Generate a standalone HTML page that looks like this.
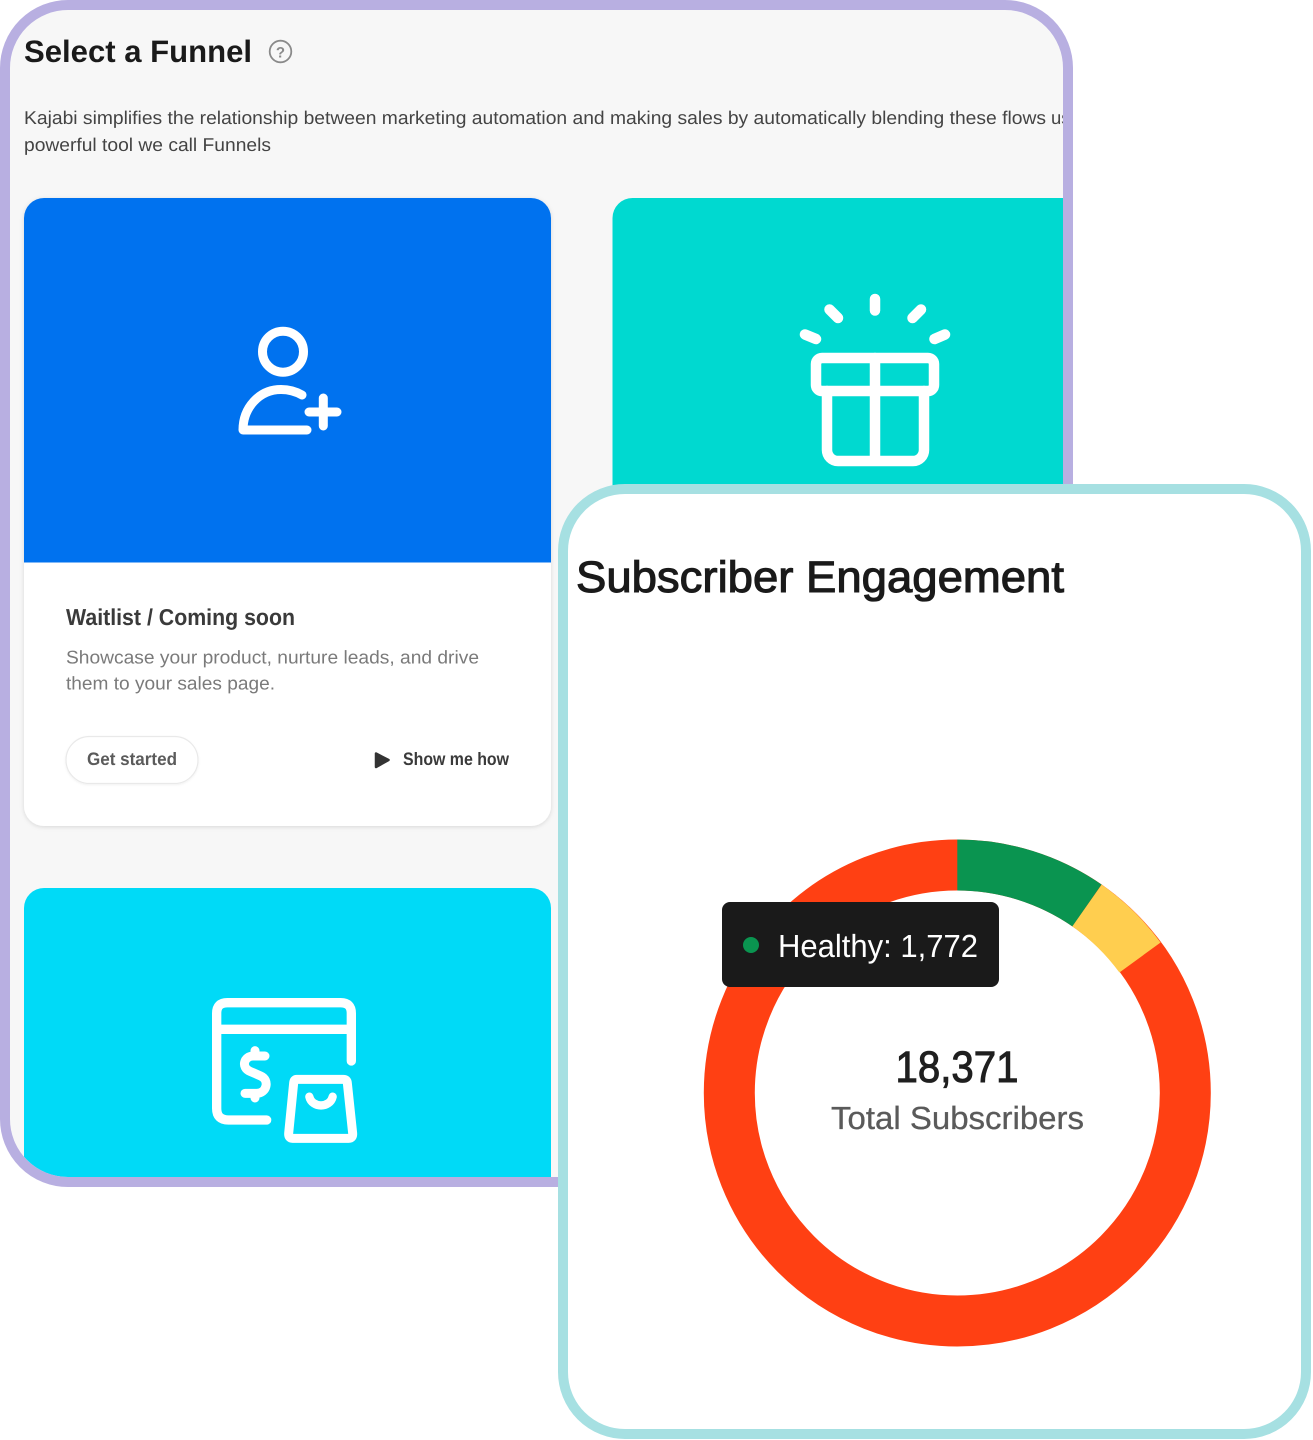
<!DOCTYPE html>
<html lang="en">
<head>
<meta charset="utf-8">
<title>Select a Funnel</title>
<style>
html,body{margin:0;padding:0;background:#fff;width:1313px;height:1440px;overflow:hidden}
svg{display:block;font-family:"Liberation Sans",sans-serif}
text{text-rendering:geometricPrecision}
</style>
</head>
<body>
<svg xmlns="http://www.w3.org/2000/svg" width="1313" height="1440" viewBox="0 0 1313 1440">
<defs>
<clipPath id="inner"><rect x="10" y="10" width="1053" height="1167" rx="58"/></clipPath>
<filter id="sh" x="-10%" y="-10%" width="120%" height="120%"><feDropShadow dx="0" dy="1" stdDeviation="2.2" flood-color="#000" flood-opacity=".13"/></filter>
<filter id="bs" x="-10%" y="-10%" width="120%" height="130%"><feDropShadow dx="0" dy="1" stdDeviation="1" flood-color="#000" flood-opacity=".06"/></filter>
</defs>

<g clip-path="url(#inner)">
<rect x="0" y="0" width="1073" height="1187" fill="#f7f7f7"/>
<text x="24" y="62" font-size="31" font-weight="700" fill="#1a1a1a" textLength="228" lengthAdjust="spacingAndGlyphs">Select a Funnel</text>
<circle cx="280.5" cy="51.5" r="10.8" fill="none" stroke="#8a8a8a" stroke-width="1.8"/>
<text x="280.5" y="57.5" font-size="15" font-weight="700" fill="#8a8a8a" text-anchor="middle">?</text>
<text x="24" y="124" font-size="18.5" fill="#444" textLength="1022" lengthAdjust="spacingAndGlyphs">Kajabi simplifies the relationship between marketing automation and making sales by automatically blending these flows</text>
<text x="1051" y="124" font-size="18.5" fill="#444">us</text>
<text x="24" y="151" font-size="18.5" fill="#444" textLength="247" lengthAdjust="spacingAndGlyphs">powerful tool we call Funnels</text>

<!-- card 1 -->
<rect x="24" y="198" width="527" height="628" rx="20" fill="#fff" filter="url(#sh)"/>
<path d="M24 562.5V218a20 20 0 0 1 20-20H531a20 20 0 0 1 20 20V562.5Z" fill="#0072ef"/>
<g fill="none" stroke="#fff" stroke-linecap="round" stroke-linejoin="round">
<circle cx="283" cy="351.7" r="20.5" stroke-width="9"/>
<path d="M302 395C295 391 288 389.5 281 389.5C259 389.5 243 408 243 430H307" stroke-width="9"/>
<path d="M309 412H337M323.3 398V426" stroke-width="9"/>
</g>
<text x="66" y="625" font-size="23" font-weight="700" fill="#3a3a3a" textLength="229" lengthAdjust="spacingAndGlyphs">Waitlist / Coming soon</text>
<text x="66" y="663.5" font-size="18.5" fill="#7a7a7a" textLength="413" lengthAdjust="spacingAndGlyphs">Showcase your product, nurture leads, and drive</text>
<text x="66" y="689.5" font-size="18.5" fill="#7a7a7a" textLength="209" lengthAdjust="spacingAndGlyphs">them to your sales page.</text>
<rect x="66" y="736.5" width="132" height="47" rx="23.5" fill="#fff" stroke="#e9e9e9" stroke-width="1.2" filter="url(#bs)"/>
<text x="87" y="765" font-size="18" font-weight="700" fill="#5b5b5b" textLength="90" lengthAdjust="spacingAndGlyphs">Get started</text>
<path d="M376 753.5L388.5 760L376 767Z" fill="#333" stroke="#333" stroke-width="2.5" stroke-linejoin="round"/>
<text x="403" y="765" font-size="18" font-weight="700" fill="#3a3a3a" textLength="106" lengthAdjust="spacingAndGlyphs">Show me how</text>

<!-- card 2 -->
<rect x="612.5" y="198" width="520" height="400" rx="20" fill="#00d9d0"/>
<g fill="none" stroke="#fff" stroke-linecap="round" stroke-linejoin="round" stroke-width="10.5">
<rect x="816" y="358" width="118" height="33" rx="6"/>
<path d="M827 391V450A11 11 0 0 0 838 461H913A11 11 0 0 0 924 450V391M875 358V461"/>
<path d="M875 299V310.5M829.5 309.5L838 318M921 309.5L912.5 318M805 334.5L816 339M945 334.5L934.5 339"/>
</g>

<!-- card 3 -->
<rect x="24" y="888" width="527" height="400" rx="20" fill="#00daf7"/>
<g transform="translate(190 980) scale(.33333)" fill="none" stroke="#fff" stroke-linecap="round" stroke-linejoin="round">
<path d="M484 243V100Q484 68 452 68H112Q80 68 80 100V385Q80 420 115 420H230M80 148H484" stroke-width="28"/>
<path d="M225 228H190C162 228 152 262 180 274L212 288C240 300 230 340 200 340H165M195 212V228M195 340V354" stroke-width="27"/>
<path d="M320 298H460Q471 298 472 309L488 460Q489 475 476 475H308Q295 475 296 460L311 309Q312 298 320 298Z" stroke-width="27"/>
<path d="M358 350C366 385 420 385 428 350" stroke-width="25"/>
</g>
</g>

<!-- purple frame -->
<rect x="5" y="5" width="1063" height="1177" rx="63" fill="none" stroke="#b8afe1" stroke-width="10"/>

<!-- teal panel -->
<rect x="563" y="489" width="743" height="945" rx="62" fill="#fff" stroke="#a6e0e2" stroke-width="10"/>
<text x="576" y="592" font-size="44" fill="#1a1a1a" stroke="#1a1a1a" stroke-width="1.1" textLength="488" lengthAdjust="spacingAndGlyphs">Subscriber Engagement</text>

<!-- donut -->
<g fill="none" stroke-width="51">
<circle cx="957.3" cy="1093" r="228" stroke="#ff4013"/>
<path d="M957.3 865A228 228 0 0 1 1087 905.5" stroke="#0a9450"/>
<path d="M1087 905.5A228 228 0 0 1 1140 957.5" stroke="#ffce4f"/>
</g>
<text x="957" y="1082" font-size="44" fill="#1f1f1f" stroke="#1f1f1f" stroke-width="1" text-anchor="middle" textLength="123" lengthAdjust="spacingAndGlyphs">18,371</text>
<text x="831" y="1129" font-size="32" fill="#5a5a5a" stroke="#5a5a5a" stroke-width=".3" textLength="253" lengthAdjust="spacingAndGlyphs">Total Subscribers</text>

<!-- tooltip -->
<rect x="722" y="902" width="277" height="85" rx="8" fill="#1a1a1a"/>
<circle cx="751" cy="945" r="8" fill="#0a9450"/>
<text x="778" y="957" font-size="32" fill="#fff" textLength="200" lengthAdjust="spacingAndGlyphs">Healthy: 1,772</text>
</svg>
</body>
</html>
